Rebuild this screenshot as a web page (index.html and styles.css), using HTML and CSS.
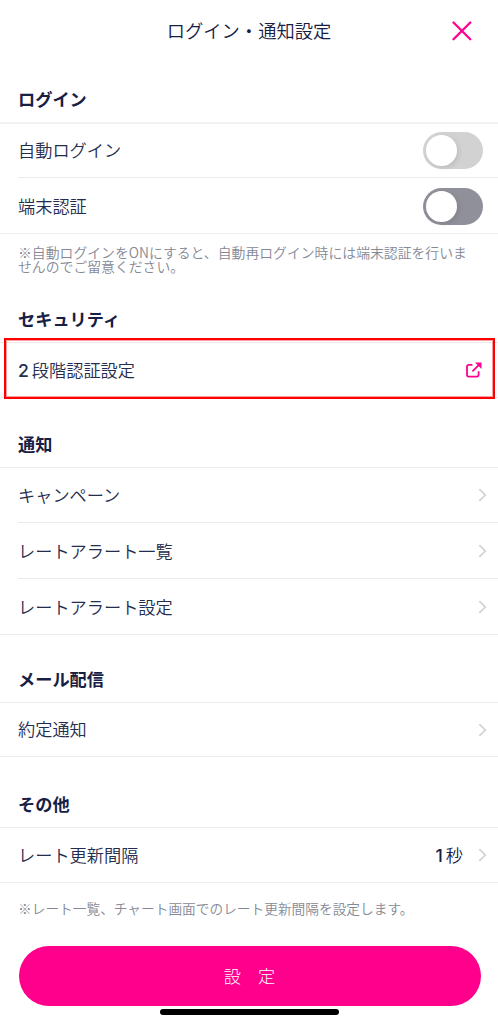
FILE: index.html
```html
<!DOCTYPE html>
<html lang="ja">
<head>
<meta charset="utf-8">
<title>ログイン・通知設定</title>
<link rel="stylesheet" href="styles.css">
</head>
<body>
<main class="screen">
  <header class="header">
    <h1 class="title">ログイン・通知設定</h1>
    <button class="close" aria-label="閉じる"><svg width="20" height="20" viewBox="0 0 20 20"><path d="M1.5 1.5 18.3 18.3M18.3 1.5 1.5 18.3"/></svg></button>
  </header>

  <section class="section login">
    <h2 class="heading">ログイン</h2>
    <div class="row"><span class="label">自動ログイン</span><span class="toggle"><span class="knob"></span></span></div>
    <div class="row"><span class="label">端末認証</span><span class="toggle enabled"><span class="knob"></span></span></div>
    <p class="note">※自動ログインをONにすると、自動再ログイン時には端末認証を行いま<br>せんのでご留意ください。</p>
  </section>

  <section class="section security">
    <h2 class="heading">セキュリティ</h2>
    <div class="row"><span class="label two-step"><span class="digit">2</span>段階認証設定</span><svg class="external" width="16" height="16" viewBox="0 0 16 16"><path d="M6.4 2.8H2.8Q1 2.8 1 4.6V12.8Q1 14.6 2.8 14.6H10.8Q12.6 14.6 12.6 12.8V9.2M6.4 9.4 13 2.8"/><path class="tip" d="M9 .5H15.5V7Z"/></svg></div>
    <div class="highlight"></div>
  </section>

  <section class="section notice">
    <h2 class="heading">通知</h2>
    <div class="row"><span class="label">キャンペーン</span><svg class="chevron" width="9" height="14" viewBox="0 0 9 14"><path d="M1.3 1.2 7.3 7 1.3 12.8"/></svg></div>
    <div class="row"><span class="label">レートアラート一覧</span><svg class="chevron" width="9" height="14" viewBox="0 0 9 14"><path d="M1.3 1.2 7.3 7 1.3 12.8"/></svg></div>
    <div class="row"><span class="label">レートアラート設定</span><svg class="chevron" width="9" height="14" viewBox="0 0 9 14"><path d="M1.3 1.2 7.3 7 1.3 12.8"/></svg></div>
  </section>

  <section class="section mail">
    <h2 class="heading">メール配信</h2>
    <div class="row"><span class="label">約定通知</span><svg class="chevron" width="9" height="14" viewBox="0 0 9 14"><path d="M1.3 1.2 7.3 7 1.3 12.8"/></svg></div>
  </section>

  <section class="section other">
    <h2 class="heading">その他</h2>
    <div class="row"><span class="label">レート更新間隔</span><span class="value"><span class="digit">1</span>秒</span><svg class="chevron" width="9" height="14" viewBox="0 0 9 14"><path d="M1.3 1.2 7.3 7 1.3 12.8"/></svg></div>
    <p class="note single">※レート一覧、チャート画面でのレート更新間隔を設定します。</p>
  </section>

  <button class="submit">設　定</button>
  <div class="home-bar"></div>
</main>
</body>
</html>
```
FILE: styles.css
```css
* { box-sizing: border-box; }
body {
  margin: 0;
  background: #fff;
  color: #172044;
  font-family: "Noto Sans CJK JP", sans-serif;
  font-size: 17.2px;
}
button { border: 0; padding: 0; font: inherit; }
.screen {
  display: flex;
  flex-direction: column;
  height: 1024px;
  overflow: hidden;
}
.header {
  display: grid;
  grid-template-columns: 1fr auto 1fr;
  align-items: center;
  height: 61px;
  padding: 0 26px;
}
.title {
  grid-column: 2;
  margin: 0;
  padding-bottom: 2px;
  font-size: 18.3px;
  font-weight: 350;
}
.close { justify-self: end; display: flex; background: none; }
.close svg { fill: none; stroke: #ff0090; stroke-width: 2.3; stroke-linecap: round; }
.section { position: relative; flex: none; }
.login { height: 235px; }
.security { height: 125px; }
.notice { height: 234px; }
.mail { height: 125px; }
.other { height: 166px; }
.heading {
  display: flex;
  align-items: center;
  height: 46px;
  margin: 0;
  padding: 0 18px 2px;
  font-size: 17.2px;
  font-weight: 700;
}
.login .heading { margin-top: 15px; }
.mail .heading, .other .heading { height: 47px; padding-bottom: 0; }
.row {
  display: flex;
  align-items: center;
  height: 56px;
  margin-left: 18px;
  padding-right: 11px;
  border-top: 1px solid #ebebed;
}
.heading + .row {
  height: 55px;
  margin-left: 0;
  padding-left: 18px;
}
.login .heading + .row { border-top: 2px solid #f1f1f2; }
.label { flex: 1; font-weight: 350; color: #252d4e; }
.heading + .row .label, .value { padding-bottom: 2px; }
.digit { font-family: Inter, sans-serif; font-size: 17.6px; font-weight: 450; }
.two-step .digit { margin-right: 3px; }
.value { display: flex; align-items: baseline; gap: 3px; margin-right: 15px; font-weight: 350; }
.toggle {
  display: flex;
  width: 60px;
  height: 37px;
  margin-right: 4px;
  padding: 3px;
  border-radius: 19px;
  background: #d2d2d3;
}
.knob {
  width: 31px;
  height: 31px;
  border-radius: 50%;
  background: #fff;
  box-shadow: 2px 2px 5px #00000018;
}
.enabled { margin-top: 1px; background: #90909b; }
.note {
  margin: 0;
  padding: 11px 18px 0;
  border-top: 1px solid #eeeef0;
  color: #858995;
  font-size: 13.85px;
  font-weight: 350;
  line-height: 14px;
  white-space: nowrap;
}
.note.single { padding-top: 18px; font-size: 13.7px; }
.security .row { border-bottom: 1px solid #ededed; height: 56px; }
.external { margin-right: 5px; fill: none; stroke: #ff0090; stroke-width: 1.8; }
.external .tip { fill: #ff0090; stroke: none; }
.highlight {
  position: absolute;
  z-index: 1;
  top: 42px;
  left: 4px;
  width: 491px;
  height: 61px;
  border: 2px solid #f00;
  outline: 1px solid #ff000060;
  outline-offset: -3px;
}
.chevron { fill: none; stroke: #d3d3d6; stroke-width: 1.7; }
.notice .row:last-child, .mail .row { border-bottom: 1px solid #ebebed; }
.notice .row:last-child {
  height: 57px;
  margin-left: 0;
  padding-left: 18px;
  border-top-color: transparent;
  background: linear-gradient(#ebebed, #ebebed) 18px 0 / 100% 1px no-repeat border-box;
}
.submit {
  flex: none;
  width: 462px;
  height: 60px;
  margin-left: 18.5px;
  padding-bottom: 2px;
  border-radius: 30px;
  background: #ff008c;
  color: #fff;
  font-weight: 300;
}
.home-bar {
  flex: none;
  width: 179px;
  height: 6px;
  margin: 3px 0 0 160px;
  border-radius: 3px;
  background: #000;
}
```
